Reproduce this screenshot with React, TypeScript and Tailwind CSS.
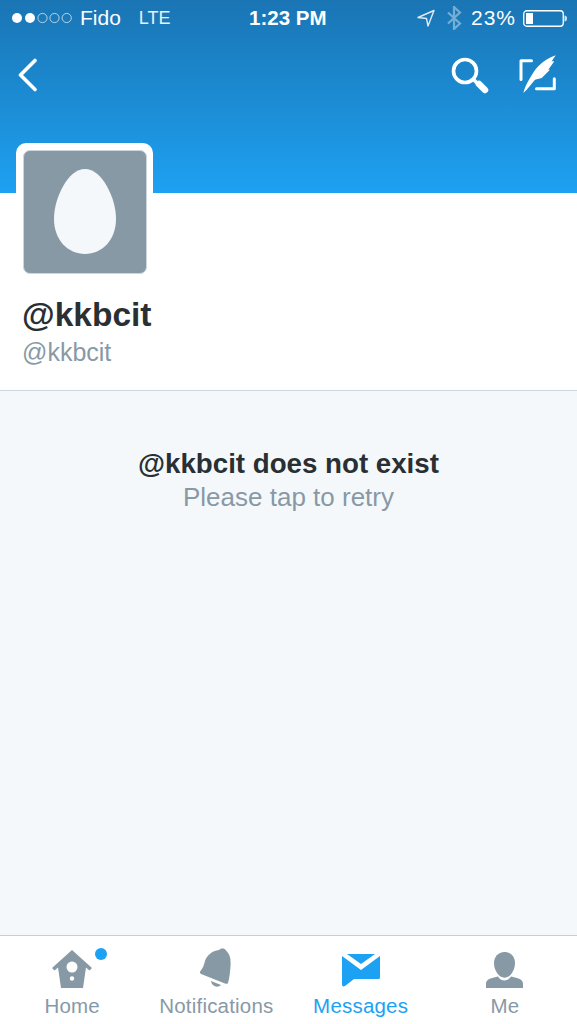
const font = { fontFamily: '"Liberation Sans", Arial, sans-serif' };

function Signal() {
  return (
    <svg width="62" height="14" viewBox="0 0 62 14" className="ml-[11px] shrink-0">
      <circle cx="6" cy="7" r="5" fill="#fff" />
      <circle cx="19" cy="7" r="5" fill="#fff" />
      <circle cx="31.5" cy="7" r="4.6" fill="none" stroke="#fff" strokeOpacity=".65" strokeWidth="1" />
      <circle cx="43.5" cy="7" r="4.6" fill="none" stroke="#fff" strokeOpacity=".65" strokeWidth="1" />
      <circle cx="55.7" cy="7" r="4.6" fill="none" stroke="#fff" strokeOpacity=".65" strokeWidth="1" />
    </svg>
  );
}

function StatusBar() {
  return (
    <div className="relative flex h-[36px] items-center text-white">
      <Signal />
      <span className="ml-[7px] text-[21px]">Fido</span>
      <span className="ml-[18px] text-[18px] opacity-90">LTE</span>
      <span className="absolute left-[249px] top-[6px] text-[20.5px] font-bold leading-[24px]">1:23 PM</span>
      <div className="ml-auto mr-[10px] flex items-center">
        <svg width="18" height="18" viewBox="0 0 18 18" fill="none" stroke="#fff" strokeOpacity=".85" strokeWidth="1.4" strokeLinejoin="round">
          <path d="M1 8.5 17 1.5 11 17 9.5 9.5Z" />
        </svg>
        <svg width="16" height="24" viewBox="0 0 16 24" fill="none" stroke="#fff" strokeOpacity=".4" strokeWidth="2.2" className="ml-[11px]">
          <path d="M2 6.5 14 17.5 8 23V1L14 6.5 2 17.5" />
        </svg>
        <span className="ml-[9px] text-[21px] tracking-[1px]">23%</span>
        <svg width="44" height="17" viewBox="0 0 44 17" className="ml-[7px]">
          <rect x=".75" y=".75" width="39.5" height="15.5" rx="3" fill="none" stroke="#fff" strokeWidth="1.3" />
          <rect x="3" y="3" width="7" height="11" fill="#fff" />
          <path d="M41.5 5.5c1.5 0 2.5 1 2.5 3s-1 3-2.5 3Z" fill="#fff" fillOpacity=".8" />
        </svg>
      </div>
    </div>
  );
}

function NavBar() {
  return (
    <div className="flex h-[78px] items-center pl-[18px] pr-[19px]">
      <svg width="20" height="34" viewBox="0 0 20 34" fill="none" stroke="#fff" strokeWidth="3.6" strokeLinecap="round" strokeLinejoin="round">
        <path d="M17 2.5 2.5 17 17 31.5" />
      </svg>
      <svg width="38" height="40" viewBox="0 0 38 40" fill="none" stroke="#fff" className="ml-auto">
        <circle cx="14" cy="16" r="11.5" strokeWidth="3.6" />
        <path d="M23 25 28 30" strokeWidth="3.6" />
        <path d="M28 29 34 35" strokeWidth="6.5" strokeLinecap="round" />
      </svg>
      <svg width="40" height="42" viewBox="0 0 40 42" fill="none" className="ml-[29px]">
        <path d="M13.5 6.7H3V25.5" stroke="#fff" strokeWidth="3" strokeLinecap="round" strokeLinejoin="round" />
        <path d="M36.3 24.7V34.7H18.5" stroke="#fff" strokeWidth="3" strokeLinecap="round" strokeLinejoin="round" />
        <path d="M5.3 39C6.5 34 9 29 12 24C14.5 20 17 15.5 20.3 12.3C25 7.5 31 3.5 37.7 1.3L33.7 7.3H36.3L30.3 15.7H32L23.7 24L17 25.7L8.7 35.7Z" fill="#fff" />
      </svg>
    </div>
  );
}

function Tab({ label, active, children, dot }: { label: string; active?: boolean; children: React.ReactNode; dot?: boolean }) {
  return (
    <div className="relative flex flex-1 flex-col items-center">
      <div className="flex h-[52px] items-end justify-center">{children}</div>
      <span className={`mt-[6px] text-[20.5px] leading-[24px] tracking-[0.2px] ${active ? "text-[#1da1f2]" : "text-[#8899a6]"}`}>{label}</span>
      {dot && <span className="absolute left-[95px] top-[12px] h-[12px] w-[12px] rounded-full bg-[#1da1f2]" />}
    </div>
  );
}

export default function App() {
  return (
    <div style={font} className="flex h-[1024px] w-[577px] flex-col overflow-hidden bg-white">
      <header className="h-[193px] shrink-0 bg-gradient-to-b from-[#1a75b4] to-[#1da1f2]">
        <StatusBar />
        <NavBar />
      </header>

      <section className="h-[198px] shrink-0 border-b border-[#ccd6dd] bg-white pl-[16px]">
        <div className="-mt-[50px] h-[137px] w-[137px] rounded-[10px] bg-white p-[7px]">
          <div className="flex h-[124px] w-[124px] items-center justify-center rounded-[7px] border border-[#ccd6dd] bg-[#8899a6]">
            <svg width="62" height="86" viewBox="0 0 62 86">
              <path d="M31 0C48 0 62 29 62 50C62 71 48 85 31 85C14 85 0 71 0 50C0 29 14 0 31 0Z" fill="#f5f8fa" />
            </svg>
          </div>
        </div>
        <h1 className="ml-[6px] mt-[13px] text-[33.5px] font-bold leading-[44px] text-[#292f33]">@kkbcit</h1>
        <p className="ml-[6px] mt-[1px] text-[25px] leading-[28px] text-[#8899a6]">@kkbcit</p>
      </section>

      <main className="flex-1 bg-[#f5f8fa] pt-[55px] text-center">
        <p className="text-[27.7px] font-bold leading-[36px] text-[#292f33]">@kkbcit does not exist</p>
        <p className="text-[26px] leading-[30px] text-[#8899a6]">Please tap to retry</p>
      </main>

      <nav className="flex h-[89px] shrink-0 border-t border-[#c4cfd6] bg-white">
        <Tab label="Home" dot>
          <svg width="42" height="38" viewBox="0 0 42 38" fill="#8899a6">
            <path d="M21 0 41 18 38.5 20.5 35 17.5 32 38H10L7 17.5 3.5 20.5 1 18Z" />
            <circle cx="21" cy="17" r="5.5" fill="#fff" />
            <circle cx="21" cy="28.5" r="2.2" fill="#fff" />
          </svg>
        </Tab>
        <Tab label="Notifications">
          <svg width="34" height="40" viewBox="0 0 34 40" fill="#8899a6">
            <path d="M1.5 23C4 20 5 17 6 13C8 7 13 3 20 2C21 0 26 -0.5 27 2.5C31 6 32 11 31.5 18C31 24 30.5 30 29 35C28.5 36 27 36 26 35.5L2 26C0.5 25 0.5 24 1.5 23Z" />
            <path d="M12 33 22 37C19 40 13 39 12 33Z" />
          </svg>
        </Tab>
        <Tab label="Messages" active>
          <svg width="38" height="33" viewBox="0 0 38 33" fill="#1da1f2" className="mb-[1px]">
            <path d="M0 2 19 16 38 2V23C38 25 37 25 36 25H12L3 32C1 33 0 32 0 30Z" />
            <path d="M5 0H33L19 10Z" />
          </svg>
        </Tab>
        <Tab label="Me">
          <svg width="37" height="36" viewBox="0 0 37 36" fill="#8899a6">
            <path d="M18.5 0C25 0 29 5 29 11C29 17 26 22 22.5 24.5C20 26 17 26 14.5 24.5C11 22 8 17 8 11C8 5 12 0 18.5 0Z" />
            <path d="M0 36V32C0 28 3 26.5 8 25.5L12 24.5C14 27.5 16 28.5 18.5 28.5C21 28.5 23 27.5 25 24.5L29 25.5C34 26.5 37 28 37 32V36Z" />
          </svg>
        </Tab>
      </nav>
    </div>
  );
}
